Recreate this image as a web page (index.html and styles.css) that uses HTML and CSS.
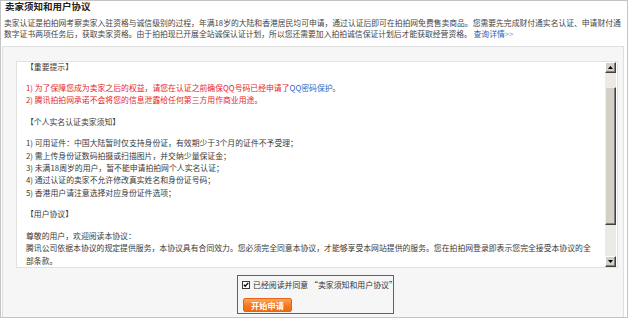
FILE: index.html
```html
<!DOCTYPE html>
<html lang="zh-CN">
<head>
<meta charset="utf-8">
<title>卖家须知和用户协议</title>
<link rel="stylesheet" href="styles.css">
</head>
<body>
<div class="page">
  <h1 class="title">卖家须知和用户协议</h1>
  <p class="desc">卖家认证是拍拍网考察卖家入驻资格与诚信级别的过程，年满18岁的大陆和香港居民均可申请，通过认证后即可在拍拍网免费售卖商品。您需要先完成财付通实名认证、申请财付通<br>数字证书两项任务后，获取卖家资格。由于拍拍现已开展全站诚保认证计划，所以您还需要加入拍拍诚信保证计划后才能获取经营资格。 <a class="more" href="#">查询详情<span class="arrows">&gt;&gt;</span></a></p>
  <div class="panel">
    <div class="agreement">
      <div class="agreement-text">
        <p class="first">【重要提示】</p>
        <p class="warn">1) 为了保障您成为卖家之后的权益，请您在认证之前确保QQ号码已经申请了<a class="link" href="#">QQ密码保护</a>。<br>2) 腾讯拍拍网承诺不会将您的信息泄露给任何第三方用作商业用途。</p>
        <p>【个人实名认证卖家须知】</p>
        <p>1) 可用证件：中国大陆暂时仅支持身份证，有效期少于3个月的证件不予受理；<br>2) 需上传身份证数码拍摄或扫描图片，并交纳少量保证金；<br>3) 未满18周岁的用户，暂不能申请拍拍网个人实名认证；<br>4) 通过认证的卖家不允许修改真实姓名和身份证号码；<br>5) 香港用户请注意选择对应身份证件选项；</p>
        <p>【用户协议】</p>
        <p>尊敬的用户，欢迎阅读本协议：<br>腾讯公司依据本协议的规定提供服务，本协议具有合同效力。您必须完全同意本协议，才能够享受本网站提供的服务。您在拍拍网登录即表示您完全接受本协议的全<br>部条款。</p>
      </div>
      <div class="scrollbar">
        <span class="sb-btn"><svg width="5" height="3" viewBox="0 0 5 3"><polygon points="2.5,0 5,3 0,3" fill="#000"/></svg></span>
        <span class="sb-track sb-track-top"></span>
        <span class="sb-thumb"></span>
        <span class="sb-track sb-track-bottom"></span>
        <span class="sb-btn"><svg width="5" height="3" viewBox="0 0 5 3"><polygon points="0,0 5,0 2.5,3" fill="#000"/></svg></span>
      </div>
    </div>
    <div class="confirm">
      <label class="check-row"><span class="checkbox"><svg width="8" height="8" viewBox="0 0 8 8"><rect x="0.5" y="0.5" width="7" height="7" fill="#fff" stroke="#3a3a3a"/><polyline points="1.8,3.6 3.2,5.3 6.3,1.9" fill="none" stroke="#000" stroke-width="1.3"/></svg></span>已经阅读并同意 “卖家须知和用户协议”</label>
      <button class="apply" type="button">开始申请</button>
    </div>
  </div>
</div>
</body>
</html>
```

FILE: styles.css
```css
* { box-sizing: border-box; }
html, body { margin: 0; padding: 0; background: #fff; }
body {
  font-family: "Noto Sans CJK SC", "Noto Sans", sans-serif;
  color: #333;
}
.page {
  width: 628px;
  height: 318px;
  border: 1px solid #c4c4c4;
  padding: 0 3px 0 1px;
  display: flex;
  flex-direction: column;
  overflow: hidden;
}
.title {
  margin: 0 0 6px 0;
  padding-left: 3px;
  font-size: 9.5px;
  line-height: 11px;
  font-weight: bold;
  color: #222;
  white-space: nowrap;
}
.desc {
  margin: 0 0 7px 0;
  padding-left: 2px;
  font-size: 7.8px;
  line-height: 10.5px;
  white-space: nowrap;
  color: #444;
}
.more { color: #2a5fb5; text-decoration: none; }
.more .arrows { color: #6f95cf; }
.panel {
  flex: 1;
  background: #f6f6f6;
  border: 1px solid #e0e0e0;
  border-bottom: none;
  padding: 14px 5px 0 13px;
  display: flex;
  flex-direction: column;
}
.agreement {
  height: 207px;
  background: #fff;
  border: 1px solid #e2e2e2;
  display: flex;
  overflow: hidden;
}
.agreement-text {
  flex: 1;
  padding-left: 9px;
  font-size: 7.85px;
  line-height: 12.3px;
  white-space: nowrap;
  overflow: hidden;
  color: #3a3a3a;
}
.agreement-text p { margin: 0 0 9.4px 0; }
.agreement-text p.first { line-height: 9px; margin-bottom: 10.8px; }
.warn { color: #e4262b; }
.link { color: #2b67c4; text-decoration: none; }
.scrollbar {
  width: 11px;
  margin-right: 1px;
  display: flex;
  flex-direction: column;
}
.sb-btn {
  height: 11px;
  background: #d4d0c8;
  border-top: 1px solid #fff;
  border-left: 1px solid #fff;
  border-right: 1px solid #404040;
  border-bottom: 1px solid #404040;
  box-shadow: inset -1px -1px 0 #808080;
  display: flex;
  align-items: center;
  justify-content: center;
}
.sb-btn svg { display: block; }
.sb-track { background: #ebeae4; }
.sb-track-top { height: 14px; }
.sb-track-bottom { flex: 1; }
.sb-thumb {
  height: 138px;
  background: #d4d0c8;
  border-top: 1px solid #eee;
  border-left: 1px solid #eee;
  border-right: 1px solid #404040;
  border-bottom: 1px solid #404040;
  box-shadow: inset -1px -1px 0 #808080;
}
.confirm {
  margin: 7px 0 0 221px;
  width: 157px;
  height: 39px;
  border: 1px solid #f0242a;
  padding: 4px 3px 0 3px;
  display: flex;
  flex-direction: column;
  align-items: flex-start;
}
.check-row {
  display: flex;
  align-items: center;
  height: 10px;
  padding-left: 1px;
  font-size: 7.9px;
  line-height: 10px;
  white-space: nowrap;
  color: #333;
}
.checkbox { width: 8px; height: 8px; margin-right: 3px; display: block; }
.checkbox svg { display: block; }
.apply {
  margin: 8px 0 0 2px;
  width: 49px;
  height: 14px;
  padding: 0;
  border: 1px solid #e5661a;
  border-radius: 2px;
  background: linear-gradient(#ffa65a, #f6781e 55%, #ef6a12);
  color: #fff;
  font-family: "Noto Sans CJK SC", sans-serif;
  font-size: 8.2px;
  line-height: 12px;
  font-weight: bold;
}
```
